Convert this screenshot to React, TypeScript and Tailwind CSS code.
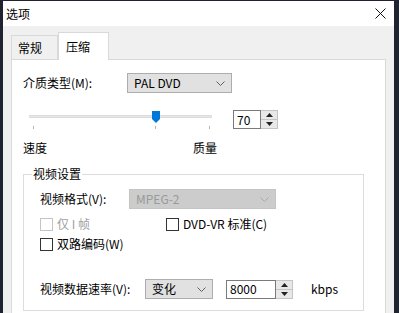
import React from "react";

const font = { fontFamily: '"Noto Sans CJK SC", "Noto Sans", sans-serif' };

function Chevron({ color = "#606060" }: { color?: string }) {
  return (
    <svg width="9" height="5" viewBox="0 0 9 5">
      <path d="M0.5 0.5 L4.5 4.5 L8.5 0.5" fill="none" stroke={color} strokeWidth="1" />
    </svg>
  );
}

function Select({
  value,
  width,
  disabled,
}: {
  value: string;
  width: string;
  disabled?: boolean;
}) {
  return (
    <div
      className={`${width} h-[20px] flex items-center justify-between pl-[6px] pr-[6px] border ${
        disabled
          ? "bg-[#cccccc] border-[#c4c4c4] text-[#9a9a9a]"
          : "bg-[#e1e1e1] border-[#adadad] text-black"
      }`}
    >
      <span>{value}</span>
      <Chevron color={disabled ? "#a8a8a8" : "#606060"} />
    </div>
  );
}

function Spinner({ value, width }: { value: string; width: string }) {
  return (
    <div className="flex h-[19px]">
      <div className={`${width} h-full border border-[#7a7a7a] bg-white flex items-center pl-[3px]`}>
        {value}
      </div>
      <div className="w-[17px] h-full border border-l-0 border-[#c4c4c4] bg-[#e8e8e8] flex flex-col">
        <div className="flex-1 flex items-center justify-center border-b border-[#c4c4c4]">
          <svg width="7" height="4" viewBox="0 0 7 4">
            <path d="M0 4 L3.5 0 L7 4 Z" fill="#222" />
          </svg>
        </div>
        <div className="flex-1 flex items-center justify-center">
          <svg width="7" height="4" viewBox="0 0 7 4">
            <path d="M0 0 L3.5 4 L7 0 Z" fill="#222" />
          </svg>
        </div>
      </div>
    </div>
  );
}

function Check({ label, disabled }: { label: string; disabled?: boolean }) {
  return (
    <div className={`flex items-center gap-[4px] ${disabled ? "text-[#a0a0a0]" : "text-black"}`}>
      <div
        className={`w-[13px] h-[13px] border bg-white ${
          disabled ? "border-[#c4c4c4]" : "border-[#333333]"
        }`}
      />
      <span>{label}</span>
    </div>
  );
}

function Slider() {
  return (
    <div className="relative w-[183px] h-[21px]">
      <div className="absolute left-0 right-0 top-[6px] h-[3px] bg-[#e7e7e7] border-y border-[#dcdcdc]" />
      <svg className="absolute left-[123px] top-[2px]" width="8" height="12" viewBox="0 0 8 12">
        <path d="M0 0 H8 V8 L4 12 L0 8 Z" fill="#0078d7" />
      </svg>
      <div className="absolute left-[4px] top-[17px] w-px h-[3px] bg-[#b5b5b5]" />
      <div className="absolute left-[126px] top-[17px] w-px h-[3px] bg-[#b5b5b5]" />
      <div className="absolute left-[180px] top-[17px] w-px h-[3px] bg-[#b5b5b5]" />
    </div>
  );
}

export default function App() {
  return (
    <div
      className="w-[399px] h-[313px] bg-[#1f2430] overflow-hidden pt-[1px] pl-[3px] text-[12px] leading-[16px]"
      style={font}
    >
      <div className="w-[391px] h-[330px] bg-[#f0f0f0] flex flex-col">
        {/* Title bar */}
        <div className="h-[25px] bg-white flex items-center justify-between pl-[3px] pr-[8px] text-black">
          <span className="text-[12px]">选项</span>
          <svg width="11" height="11" viewBox="0 0 11 11">
            <path d="M0.5 0.5 L10.5 10.5 M10.5 0.5 L0.5 10.5" stroke="#111" strokeWidth="1" />
          </svg>
        </div>

        <div className="flex-1 flex flex-col pl-[8px] pt-[6px]">
          {/* Tabs */}
          <div className="flex items-end h-[27px]">
            <div className="w-[47px] h-[24px] border border-b-0 border-[#d9d9d9] bg-[#f0f0f0] flex items-center pl-[6px]">
              常规
            </div>
            <div className="relative z-10 w-[51px] h-[28px] -mb-px border border-b-0 border-[#d9d9d9] bg-white flex items-center pl-[7px]">
              压缩
            </div>
          </div>

          {/* Panel */}
          <div className="w-[375px] flex-1 border border-[#d9d9d9] bg-white flex flex-col pl-[11px]">
            <div className="flex items-center mt-[13px]">
              <span className="w-[104px]">介质类型(M):</span>
              <Select value="PAL DVD" width="w-[105px]" />
            </div>

            <div className="flex items-start mt-[17px]">
              <div className="ml-[6px] -mt-[1px]">
                <Slider />
              </div>
              <div className="ml-[21px]">
                <Spinner value="70" width="w-[28px]" />
              </div>
            </div>

            <div className="flex justify-between w-[194px] mt-[10px]">
              <span>速度</span>
              <span>质量</span>
            </div>

            <fieldset className="w-[341px] mt-[10px] border border-[#dcdcdc] px-[8px] pb-[11px]">
              <legend className="px-[1px]">视频设置</legend>
              <div className="pl-[8px] flex flex-col">
                <div className="flex items-center mt-[7px]">
                  <span className="w-[89px]">视频格式(V):</span>
                  <Select value="MPEG-2" width="w-[147px]" disabled />
                </div>
                <div className="flex items-center mt-[7px]">
                  <div className="w-[126px]">
                    <Check label="仅 I 帧" disabled />
                  </div>
                  <Check label="DVD-VR 标准(C)" />
                </div>
                <div className="flex items-center mt-[4px]">
                  <Check label="双路编码(W)" />
                </div>
                <div className="flex items-center mt-[27px]">
                  <span className="w-[105px]">视频数据速率(V):</span>
                  <Select value="变化" width="w-[68px]" />
                  <div className="ml-[13px]">
                    <Spinner value="8000" width="w-[50px]" />
                  </div>
                  <span className="ml-[18px]">kbps</span>
                </div>
              </div>
            </fieldset>
          </div>
        </div>
      </div>
    </div>
  );
}
